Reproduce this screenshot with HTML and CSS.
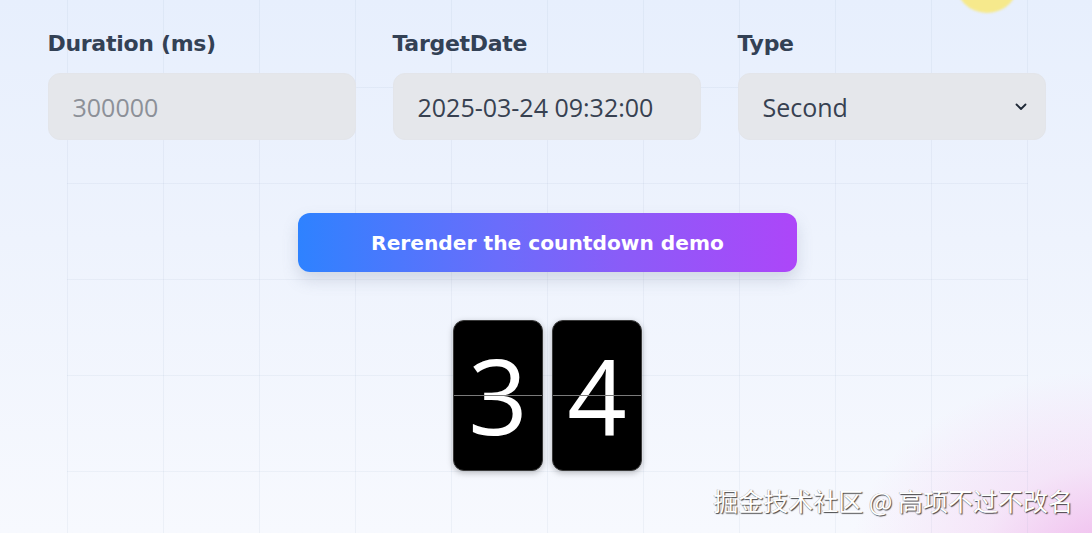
FILE: index.html
```html
<!DOCTYPE html>
<html lang="en">
<head>
<meta charset="utf-8">
<title>Countdown demo</title>
<link rel="stylesheet" href="styles.css">
</head>
<body>
  <div class="grid-layer"></div>
  <div class="sun"></div>
  <main class="page">
    <section class="form">
      <div class="field">
        <label class="label" for="duration">Duration (ms)</label>
        <input class="control" id="duration" type="text" placeholder="300000">
      </div>
      <div class="field">
        <label class="label" for="target">TargetDate</label>
        <input class="control value" id="target" type="text" value="2025-03-24 09:32:00">
      </div>
      <div class="field">
        <label class="label" for="type">Type</label>
        <div class="control select">
          <span class="value">Second</span>
          <svg class="chevron" width="12" height="8" viewBox="0 0 12 8"><path d="M1.5 1.5 L6 6 L10.5 1.5" fill="none" stroke="#1f2937" stroke-width="1.8" stroke-linecap="round" stroke-linejoin="round"/></svg>
        </div>
      </div>
    </section>

    <button class="rerender" type="button">Rerender the countdown demo</button>

    <div class="flip">
      <div class="card"><span class="digit">3</span></div>
      <div class="card"><span class="digit">4</span></div>
    </div>
  </main>
  <div class="watermark">掘金技术社区 @ 高项不过不改名</div>
</body>
</html>
```

FILE: styles.css
```css
html, body {
  margin: 0;
  padding: 0;
}

body {
  width: 1092px;
  height: 533px;
  overflow: hidden;
  position: relative;
  background:
    radial-gradient(ellipse 260px 190px at 1110px 560px, rgba(238, 168, 232, 0.8), rgba(243, 200, 240, 0.4) 50%, rgba(245, 225, 248, 0) 100%),
    linear-gradient(180deg, #e7effd 0%, #eef3fd 45%, #f7f9fe 100%);
  font-family: "DejaVu Sans", sans-serif;
}

.grid-layer {
  position: absolute;
  left: 67px;
  top: 0;
  width: 961px;
  height: 533px;
  background-image:
    linear-gradient(to right, rgba(140, 160, 190, 0.1) 1px, transparent 1px),
    linear-gradient(to bottom, rgba(140, 160, 190, 0.1) 1px, transparent 1px);
  background-size: 96px 96px;
  background-position: 0 -9px;
  pointer-events: none;
}

.sun {
  position: absolute;
  left: 955px;
  top: -51px;
  width: 64px;
  height: 64px;
  border-radius: 50%;
  background: #f6e98c;
  filter: blur(1px);
}

.page {
  position: relative;
  display: flex;
  flex-direction: column;
  align-items: center;
  padding-top: 29px;
}

.form {
  display: grid;
  grid-template-columns: repeat(3, 1fr);
  column-gap: 37px;
  width: 998px;
  margin-left: 1px;
}

.field {
  display: flex;
  flex-direction: column;
  gap: 14px;
}

.label {
  font-family: "DejaVu Sans", sans-serif;
  font-weight: 700;
  font-size: 22px;
  line-height: 30px;
  color: #334155;
  letter-spacing: -0.3px;
}

.control {
  box-sizing: border-box;
  height: 67px;
  width: 100%;
  border: 1px solid #e3e5ea;
  border-radius: 12px;
  background: #e5e7eb;
  padding: 0 18px 0 24px;
  font-family: "Open Sans", sans-serif;
  font-size: 25px;
  color: #374151;
  outline: none;
}

.control::placeholder {
  color: #8c9098;
}

.select {
  display: flex;
  align-items: center;
  justify-content: space-between;
}

.chevron {
  display: block;
}

.rerender {
  margin-top: 73px;
  width: 499px;
  height: 59px;
  border: none;
  border-radius: 12px;
  background: linear-gradient(90deg, #2e82ff 0%, #6a6dfb 40%, #8a5cf8 65%, #ad46f9 100%);
  color: #ffffff;
  font-family: "DejaVu Sans", sans-serif;
  font-weight: 700;
  font-size: 20.2px;
  box-shadow: 0 8px 16px rgba(100, 116, 139, 0.22);
  cursor: pointer;
  margin-left: 3px;
}

.flip {
  display: flex;
  gap: 9px;
  margin-top: 48px;
  margin-left: 3px;
}

.card {
  position: relative;
  box-sizing: border-box;
  width: 90px;
  height: 151px;
  border-radius: 11px;
  background: #000000;
  border: 1px solid #3a3a3a;
  box-shadow: 0 2px 6px rgba(0, 0, 0, 0.25);
  display: flex;
  align-items: center;
  justify-content: center;
  overflow: hidden;
}

.card::after {
  content: "";
  position: absolute;
  left: 0;
  right: 0;
  top: 74px;
  height: 1px;
  background: #7a7a7a;
}

.digit {
  font-family: "Open Sans", sans-serif;
  font-size: 104px;
  line-height: 1;
  color: #ffffff;
  margin-top: -2px;
}

.watermark {
  position: absolute;
  right: 19px;
  top: 483px;
  font-family: "Noto Sans CJK SC", sans-serif;
  font-size: 25px;
  line-height: 34px;
  color: #ffffff;
  text-shadow: 1px 1px 1px rgba(40, 40, 40, 0.85), -0.5px -0.5px 0 rgba(120, 120, 120, 0.6);
  white-space: nowrap;
}
```
